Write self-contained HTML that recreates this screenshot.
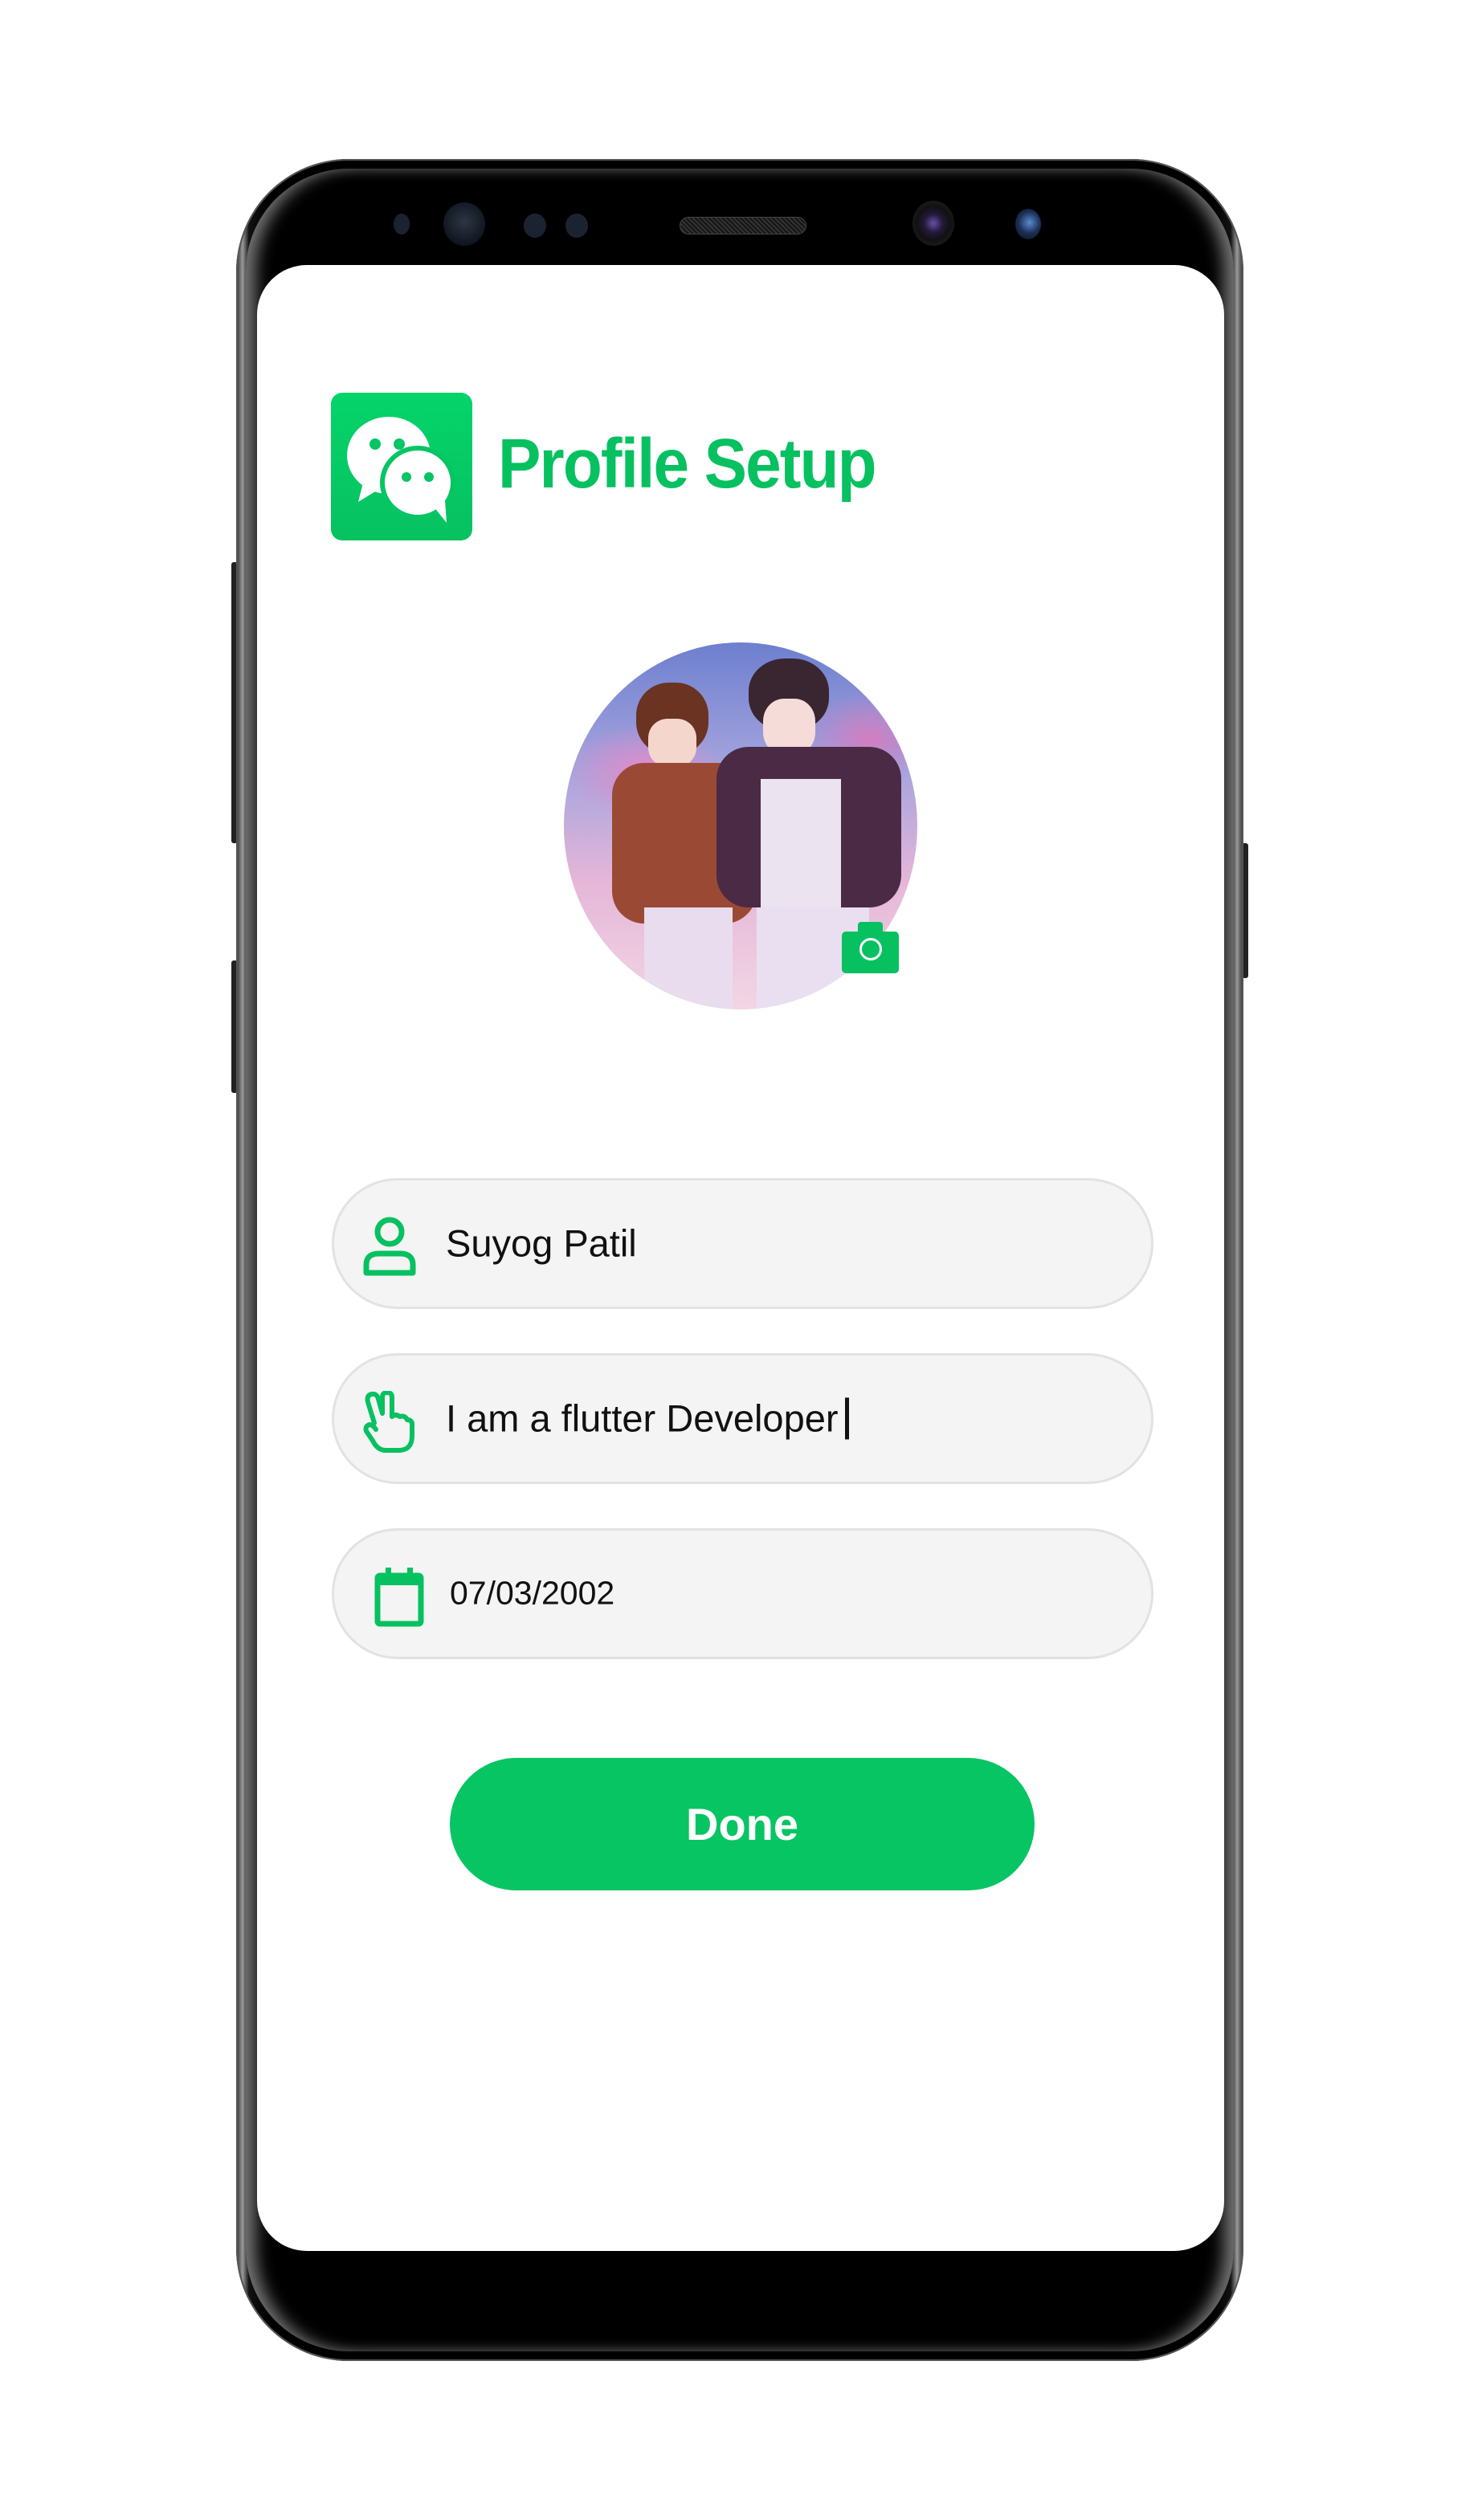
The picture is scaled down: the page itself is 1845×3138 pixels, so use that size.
<!DOCTYPE html>
<html><head><meta charset="utf-8"><style>
*{margin:0;padding:0;box-sizing:border-box}
body{width:1845px;height:3138px;background:#fff;position:relative;overflow:hidden;font-family:"Liberation Sans",sans-serif}
.abs{position:absolute}
.phone{left:294px;top:198px;width:1254px;height:2742px;border-radius:140px;background:linear-gradient(90deg,#2a2a2a 0,#9a9a9a 8px,#111 16px,#000 40px,#000 1214px,#111 1238px,#9a9a9a 1246px,#2a2a2a 1254px);box-shadow:0 0 0 2px #555 inset}
.innerb{left:306px;top:210px;width:1230px;height:2718px;border-radius:128px;background:#000;box-shadow:inset 18px 0 20px -6px #777,inset -18px 0 20px -6px #777}
.screen{left:320px;top:330px;width:1204px;height:2473px;border-radius:62px;background:#fff;overflow:hidden}
.btn{background:#222;border-radius:3px}
.field{left:413px;width:1023px;height:163px;border-radius:82px;background:#f4f4f4;border:3px solid #e2e2e2}
.ft{position:absolute;color:#111;font-size:47px;top:50%;transform:translateY(-52%)}
</style></head><body>
<div class="abs btn" style="left:288px;top:700px;width:8px;height:350px"></div>
<div class="abs btn" style="left:288px;top:1196px;width:8px;height:165px"></div>
<div class="abs btn" style="left:1546px;top:1050px;width:8px;height:168px"></div>
<div class="abs phone"></div>
<div class="abs innerb"></div>
<div class="abs" style="left:490px;top:266px;width:20px;height:26px;border-radius:50%;background:#1b2330"></div>
<div class="abs" style="left:552px;top:252px;width:52px;height:54px;border-radius:50%;background:radial-gradient(circle at 50% 45%,#2c3645,#101620 70%)"></div>
<div class="abs" style="left:652px;top:266px;width:28px;height:30px;border-radius:50%;background:#1b2330"></div>
<div class="abs" style="left:704px;top:266px;width:28px;height:30px;border-radius:50%;background:#1b2330"></div>
<div class="abs" style="left:846px;top:270px;width:158px;height:22px;border-radius:11px;background:repeating-linear-gradient(45deg,#333 0 2px,#151515 2px 4px);border:1px solid #444"></div>
<div class="abs" style="left:1136px;top:250px;width:52px;height:56px;border-radius:50%;background:radial-gradient(circle,#6a4fa8 0,#231a3a 30%,#111 55%,#2a2a2a 100%)"></div>
<div class="abs" style="left:1264px;top:260px;width:32px;height:38px;border-radius:50%;background:radial-gradient(circle at 55% 45%,#5a8ad0,#1a2e55 50%,#111 100%)"></div>

<div class="abs screen"></div>
<div class="abs" style="left:412px;top:489px;width:176px;height:184px;border-radius:14px;background:linear-gradient(#05d46a,#07c160)">
<svg width="176" height="184" viewBox="0 0 176 184">
<ellipse cx="72" cy="78" rx="52" ry="48" fill="#fff"/>
<path d="M40 112 L34 136 L60 120Z" fill="#fff"/>
<ellipse cx="108" cy="112" rx="43" ry="42" fill="#07c563" stroke="#07c563" stroke-width="8"/>
<ellipse cx="108" cy="112" rx="41" ry="40" fill="#fff"/>
<path d="M128 142 L144 162 L142 134Z" fill="#fff"/>
<circle cx="55" cy="64" r="7" fill="#07c563"/><circle cx="85" cy="64" r="7" fill="#07c563"/>
<circle cx="94" cy="105" r="6" fill="#07c563"/><circle cx="122" cy="105" r="6" fill="#07c563"/>
</svg></div>
<div class="abs" style="left:620px;top:528px;font-size:87px;font-weight:bold;color:#07c160;letter-spacing:-2px;line-height:100px;transform:scaleX(0.92);transform-origin:left">Profile Setup</div>
<div class="abs" style="left:702px;top:800px;width:440px;height:457px;border-radius:50%;overflow:hidden;background:linear-gradient(180deg,#6d7fcf 0%,#a6a5de 35%,#e5b6d8 65%,#f2d6e4 100%)">
<div class="abs" style="left:0;top:100px;width:200px;height:120px;background:radial-gradient(ellipse,#e18ac8,transparent 70%)"></div>
<div class="abs" style="left:300px;top:60px;width:160px;height:120px;background:radial-gradient(ellipse,#d27ec0,transparent 70%)"></div>
<div class="abs" style="left:90px;top:50px;width:90px;height:90px;border-radius:45%;background:#6b3322"></div>
<div class="abs" style="left:105px;top:95px;width:60px;height:60px;border-radius:40%;background:#f4d6cc"></div>
<div class="abs" style="left:230px;top:20px;width:100px;height:90px;border-radius:45%;background:#3a2630"></div>
<div class="abs" style="left:248px;top:70px;width:65px;height:70px;border-radius:40%;background:#f5dcd8"></div>
<div class="abs" style="left:60px;top:150px;width:180px;height:200px;border-radius:40px;background:#9a4a34"></div>
<div class="abs" style="left:190px;top:130px;width:230px;height:200px;border-radius:40px;background:#4b2a45"></div>
<div class="abs" style="left:245px;top:170px;width:100px;height:170px;background:#ece3f0"></div>
<div class="abs" style="left:100px;top:330px;width:110px;height:140px;background:#e9dcef"></div>
<div class="abs" style="left:240px;top:330px;width:140px;height:140px;background:#eadff0"></div>
</div>
<div class="abs" style="left:1048px;top:1160px;width:71px;height:52px;border-radius:5px;background:#07c160"></div>
<div class="abs" style="left:1068px;top:1148px;width:31px;height:16px;border-radius:4px 4px 0 0;background:#07c160"></div>
<div class="abs" style="left:1070px;top:1168px;width:28px;height:28px;border-radius:50%;border:3px solid #fff"></div>
<div class="abs field" style="top:1467px">
<svg class="abs" style="left:36px;top:45px" width="66" height="76" viewBox="0 0 66 76"><circle cx="33" cy="19" r="15" fill="none" stroke="#07c160" stroke-width="7"/><path d="M4 60 Q4 46 20 46 H46 Q62 46 62 60 V70 H4Z" fill="none" stroke="#07c160" stroke-width="7" stroke-linejoin="round"/></svg>
<div class="ft" style="left:139px">Suyog Patil</div></div>
<div class="abs field" style="top:1685px">
<svg class="abs" style="left:36px;top:44px" width="66" height="78" viewBox="0 0 66 78"><path d="M14 40 L6 14 Q4 5 11 4 Q17 3 19 10 L24 28 L24 8 Q24 2 30 2 Q36 2 36 8 V32 Q40 28 46 32 Q52 30 55 36 Q62 36 61 44 V56 Q61 74 44 74 H28 Q18 74 12 62 L4 50 Q2 44 8 42 Q12 42 16 48" fill="none" stroke="#07c160" stroke-width="6" stroke-linejoin="round" stroke-linecap="round"/></svg>
<div class="ft" style="left:139px">I am a flutter Developer<span style="display:inline-block;width:5px;height:52px;background:#111;margin-left:8px;vertical-align:-10px"></span></div></div>
<div class="abs field" style="top:1903px">
<svg class="abs" style="left:48px;top:44px" width="66" height="76" viewBox="0 0 66 76"><rect x="6" y="12" width="54" height="60" rx="3" fill="none" stroke="#07c160" stroke-width="7"/><rect x="6" y="12" width="54" height="12" fill="#07c160"/><rect x="16" y="2" width="7" height="14" fill="#07c160"/><rect x="43" y="2" width="7" height="14" fill="#07c160"/></svg>
<div class="ft" style="left:144px;font-size:41px">07/03/2002</div></div>
<div class="abs" style="left:560px;top:2189px;width:728px;height:165px;border-radius:83px;background:#07c563;color:#fff;font-size:56px;font-weight:bold;text-align:center;line-height:165px">Done</div>
</body></html>
